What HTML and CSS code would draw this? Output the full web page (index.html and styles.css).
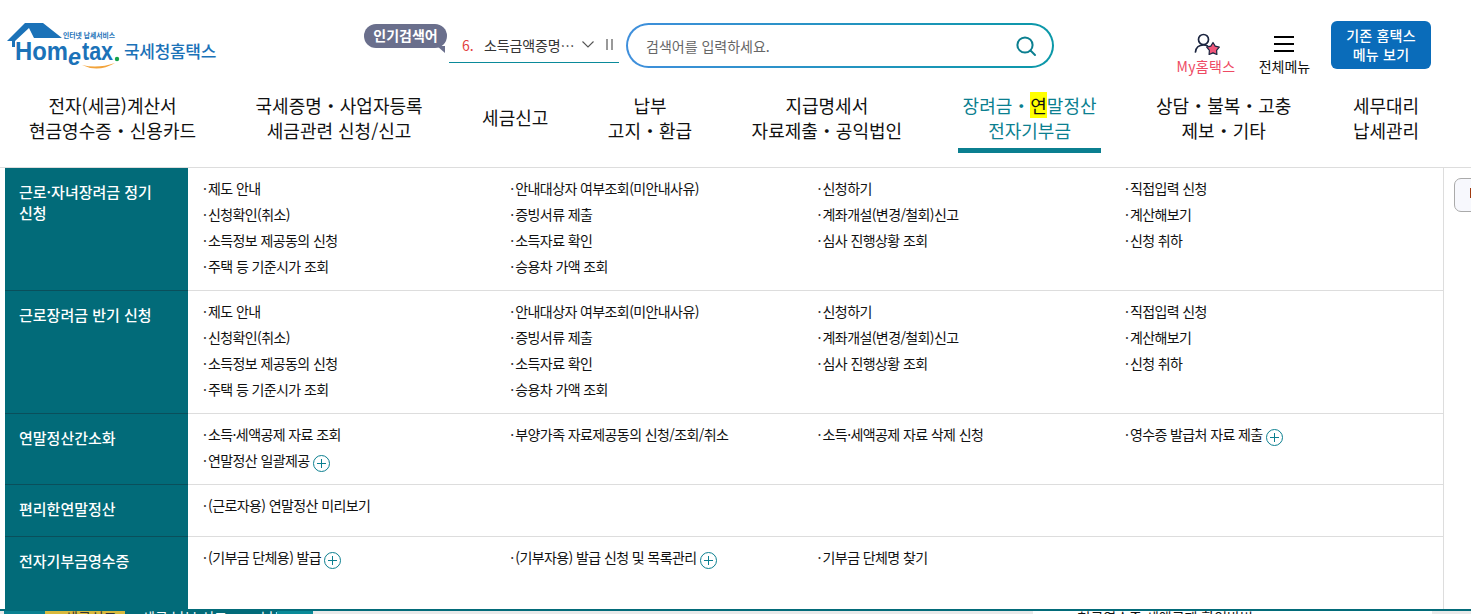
FILE: index.html
```html
<!DOCTYPE html>
<html lang="ko">
<head>
<meta charset="utf-8">
<title>국세청홈택스</title>
<link rel="stylesheet" href="styles.css">
</head>
<body>
<div class="page">
  <header class="top">
    <a class="logo">
      <svg class="logo-mark" width="118" height="60" viewBox="0 0 118 60" aria-hidden="true">
        <path d="M1 28 L19 10 H37 L56 25 H28 L23 15 L9 28 V34 H6 V28 Z" fill="#1b72b8"/>
        <text x="57" y="25" class="logo-small" textLength="52" lengthAdjust="spacingAndGlyphs">인터넷 납세서비스</text>
        <text x="9" y="47" class="logo-home" textLength="53" lengthAdjust="spacingAndGlyphs">Hom</text>
        <text x="62" y="52" class="logo-e" textLength="13" lengthAdjust="spacingAndGlyphs">e</text>
        <text x="76" y="47" class="logo-tax" textLength="31" lengthAdjust="spacingAndGlyphs">tax</text>
        <circle cx="111" cy="46" r="2.200" fill="#16a34a"/>
        <path d="M76 52 Q92 60 109 50 Q92 56 76 52 Z" fill="#f2a33a"/>
      </svg>
      <span class="logo-name">국세청홈택스</span>
    </a>
    <div class="popular">
      <span class="bubble">인기검색어</span>
      <div class="ticker">
        <span class="rank">6.</span>
        <span class="ticker-text">소득금액증명…</span>
        <svg width="12" height="7" viewBox="0 0 12 7" aria-hidden="true"><path d="M.5.5l5.500 5.500 5.500-5.500" fill="none" stroke="#555" stroke-width="1.100"/></svg>
        <span class="pause"></span>
      </div>
    </div>
    <div class="search">
      <span class="search-ph">검색어를 입력하세요.</span>
      <svg width="22" height="22" viewBox="0 0 22 22" aria-hidden="true"><circle cx="10" cy="10" r="7.600" fill="none" stroke="#0b7f90" stroke-width="2"/><path d="M15.500 15.500L20 20" stroke="#0b7f90" stroke-width="2" stroke-linecap="round"/></svg>
    </div>
    <div class="util">
      <a class="util-item my">
        <svg width="28" height="22" viewBox="0 0 28 22" aria-hidden="true">
          <circle cx="9.500" cy="6.500" r="5" fill="none" stroke="#1b2540" stroke-width="1.700"/>
          <path d="M1.500 19c.5-5 3.500-7 8-7 1.500 0 3 .3 4 1" fill="none" stroke="#1b2540" stroke-width="1.700" stroke-linecap="round"/>
          <path d="M19 9.500l2.200 3.600 4.100 1-2.700 3.200.3 4.200-3.900-1.600-3.900 1.600.3-4.200-2.700-3.200 4.100-1z" fill="#f0567a" stroke="#1b2540" stroke-width="1.200" stroke-linejoin="round"/>
        </svg>
        <span>My홈택스</span>
      </a>
      <a class="util-item all">
        <svg width="20" height="22" viewBox="0 0 20 22" aria-hidden="true"><path d="M0 4h20M0 11h20M0 18h20" stroke="#000" stroke-width="2"/></svg>
        <span>전체메뉴</span>
      </a>
      <a class="old-btn">기존 홈택스<br>메뉴 보기</a>
    </div>
  </header>

  <nav class="gnb">
    <a class="gnb-item">전자(세금)계산서<br>현금영수증・신용카드</a>
    <a class="gnb-item">국세증명・사업자등록<br>세금관련 신청/신고</a>
    <a class="gnb-item single">세금신고</a>
    <a class="gnb-item">납부<br>고지・환급</a>
    <a class="gnb-item">지급명세서<br>자료제출・공익법인</a>
    <a class="gnb-item active">장려금・<mark>연</mark>말정산<br>전자기부금</a>
    <a class="gnb-item">상담・불복・고충<br>제보・기타</a>
    <a class="gnb-item">세무대리<br>납세관리</a>
  </nav>

  <main class="panel">
    <div class="table">
      <section class="row r1">
        <h3 class="side">근로·자녀장려금 정기<br>신청</h3>
        <ul class="links">
          <li>제도 안내</li><li>안내대상자 여부조회(미안내사유)</li><li>신청하기</li><li>직접입력 신청</li>
          <li>신청확인(취소)</li><li>증빙서류 제출</li><li>계좌개설(변경/철회)신고</li><li>계산해보기</li>
          <li>소득정보 제공동의 신청</li><li>소득자료 확인</li><li>심사 진행상황 조회</li><li>신청 취하</li>
          <li>주택 등 기준시가 조회</li><li>승용차 가액 조회</li>
        </ul>
      </section>
      <section class="row r1">
        <h3 class="side">근로장려금 반기 신청</h3>
        <ul class="links">
          <li>제도 안내</li><li>안내대상자 여부조회(미안내사유)</li><li>신청하기</li><li>직접입력 신청</li>
          <li>신청확인(취소)</li><li>증빙서류 제출</li><li>계좌개설(변경/철회)신고</li><li>계산해보기</li>
          <li>소득정보 제공동의 신청</li><li>소득자료 확인</li><li>심사 진행상황 조회</li><li>신청 취하</li>
          <li>주택 등 기준시가 조회</li><li>승용차 가액 조회</li>
        </ul>
      </section>
      <section class="row r3">
        <h3 class="side">연말정산간소화</h3>
        <ul class="links">
          <li>소득·세액공제 자료 조회</li><li>부양가족 자료제공동의 신청/조회/취소</li><li>소득·세액공제 자료 삭제 신청</li><li>영수증 발급처 자료 제출 <i class="plus"></i></li>
          <li>연말정산 일괄제공 <i class="plus"></i></li>
        </ul>
      </section>
      <section class="row r4">
        <h3 class="side">편리한연말정산</h3>
        <ul class="links">
          <li>(근로자용) 연말정산 미리보기</li>
        </ul>
      </section>
      <section class="row r5">
        <h3 class="side">전자기부금영수증</h3>
        <ul class="links">
          <li>(기부금 단체용) 발급 <i class="plus"></i></li><li>(기부자용) 발급 신청 및 목록관리 <i class="plus"></i></li><li>기부금 단체명 찾기</li>
        </ul>
      </section>
    </div>
    <aside class="rail"><span class="rail-btn"></span></aside>
  </main>

  <div class="under">
    <span class="u u-gray"></span>
    <span class="u u-teal"></span>
    <span class="u u-yellow">세금신고</span>
    <span class="u u-dark">세금 납부 신고 <b class="u-gap">납부</b></span>
    <span class="u u-light"></span>
    <span class="u u-mid"></span>
    <span class="u u-white"><b class="u-dot">·</b>현금영수증 세액공제 확인방법</span>
    <span class="u u-end"></span>
  </div>
</div>
</body>
</html>
```
FILE: styles.css
```css
* { box-sizing: border-box; }
html, body { margin: 0; padding: 0; background: #fff; }
body { font-family: "Noto Sans CJK KR", "Noto Sans", sans-serif; color: #111; }
.page { width: 1471px; height: 614px; overflow: hidden; display: flex; flex-direction: column; }

.top { height: 90px; display: flex; align-items: flex-start; flex: none; }
.logo { display: flex; align-items: flex-start; margin: 13px 0 0 6px; width: 358px; flex: none; }
.logo-mark { display: block; flex: none; }
.logo-small { font-size: 7px; fill: #1b72b8; font-weight: 700; }
.logo-home, .logo-tax { font-family: "Liberation Sans", sans-serif; font-size: 26px; font-weight: 700; fill: #1b72b8; }
.logo-e { font-family: "Liberation Sans", sans-serif; font-size: 23px; font-weight: 700; font-style: italic; fill: #1b72b8; }
.logo-name { font-size: 17px; font-weight: 500; color: #1b72b8; letter-spacing: -.3px; margin-top: 25px; }

.popular { width: 255px; flex: none; position: relative; height: 70px; }
.bubble { position: absolute; left: 0; top: 24px; background: #6a6f8c; color: #fff; border-radius: 12px; height: 24px; width: 83px; line-height: 23px; text-align: center; font-size: 14px; font-weight: 700; }
.bubble::after { content: ""; position: absolute; right: 2px; bottom: -5px; border-top: 7px solid #6a6f8c; border-left: 8px solid transparent; }
.ticker { position: absolute; left: 85px; top: 27px; width: 170px; height: 36px; border-bottom: 1px solid #0a8a9a; display: flex; align-items: center; font-size: 14px; color: #333; padding-left: 13px; }
.rank { color: #e2403f; width: 22px; }
.ticker-text { width: 98px; letter-spacing: -.15px; white-space: nowrap; }
.pause { width: 7px; height: 11px; margin-left: 12px; border-left: 2px solid #999; border-right: 2px solid #999; }

.search { width: 428px; height: 45px; margin: 23px 0 0 7px; border: 2px solid transparent; border-radius: 23px; background: linear-gradient(#fff,#fff) padding-box, linear-gradient(90deg,#3f8fdc,#0b98a8) border-box; display: flex; align-items: center; justify-content: space-between; padding: 0 15px 0 18px; flex: none; }
.search-ph { font-size: 14px; color: #666; }

.util { display: flex; align-items: flex-start; margin-left: 122px; flex: none; }
.util-item { display: flex; flex-direction: column; align-items: center; font-size: 14px; white-space: nowrap; }
.util-item svg { display: block; margin-top: 33px; }
.util-item span { line-height: 20px; margin-top: 1px; }
.my { width: 60px; color: #ee4a63; letter-spacing: .3px; }
.my svg { margin-left: 4px; }
.all { width: 51px; margin-left: 23px; color: #111; }
.all svg { margin-right: 1px; }
.old-btn { width: 100px; height: 48px; margin: 21px 0 0 21px; background: #0a6cba; border-radius: 6px; color: #fff; font-size: 14px; font-weight: 500; line-height: 19px; text-align: center; padding-top: 5px; letter-spacing: .2px; }

.gnb { height: 78px; flex: none; display: flex; gap: 59.500px; padding-left: 29px; border-bottom: 1px solid #ddd; align-items: flex-start; }
.gnb-item { display: block; font-size: 18px; line-height: 25px; text-align: center; white-space: nowrap; padding-top: 3px; position: relative; height: 64px; }
.gnb-item.single { padding-top: 15px; }
.gnb-item.active { color: #0b7f90; margin-left: 1px; }
.gnb-item:last-child { margin-left: 2px; }
.gnb-item.active::after { content: ""; position: absolute; left: -5px; right: -4px; top: 58px; height: 5px; background: #0b7f90; }
.gnb-item mark { background: #ffff00; color: #111; }

.panel { flex: none; height: 441px; padding-left: 5px; display: flex; }
.table { width: 1439px; border-right: 1px solid #ddd; flex: none; }
.row { display: flex; border-bottom: 1px solid #ddd; }
.r1 { height: 123px; }
.r3 { height: 71px; }
.r4 { height: 52px; }
.r5 { height: 72px; border-bottom: 0; }
.side { width: 183px; flex: none; margin: 0 0 -1px; background: #026b79; border-bottom: 1px solid #0a4f5b; color: #fff; font-size: 15px; font-weight: 500; line-height: 21px; padding: 13px 0 0 14px; }
.r5 .side { border-bottom: 0; margin-bottom: 0; }
.links { flex: 1; margin: 0; list-style: none; padding: 7px 0 0 15px; display: grid; grid-template-columns: repeat(4, 307.300px); grid-auto-rows: 26px; align-content: start; }
.links li { font-size: 14px; line-height: 26px; letter-spacing: -.6px; white-space: nowrap; color: #111; }
.links li::before { content: "·"; display: inline-block; width: 5px; color: #333; }
.plus { display: inline-block; position: relative; width: 17px; height: 17px; border: 1px solid #0b7f90; border-radius: 50%; vertical-align: -6px; }
.plus::before { content: ""; position: absolute; left: 3px; right: 3px; top: 7px; height: 1px; background: #0b7f90; }
.plus::after { content: ""; position: absolute; top: 3px; bottom: 3px; left: 7px; width: 1px; background: #0b7f90; }

.rail { flex: 1; padding: 10px 0 0 10px; }
.rail-btn { display: block; width: 40px; height: 34px; background: #f7f8fd; border: 1px solid #aaa; border-radius: 7px; position: relative; }
.rail-btn::after { content: ""; position: absolute; left: 15px; top: 9px; width: 3px; height: 10px; background: #a03a10; }

.under { flex: 1; min-height: 0; border-top: 2px solid #026b79; display: flex; overflow: hidden; align-items: flex-start; }
.u { display: block; height: 14px; font-size: 14px; line-height: 14px; margin-top: -1px; white-space: nowrap; flex: none; }
.u-gray { width: 4px; background: #e9e9e9; }
.u-teal { width: 41px; background: #0a8090; }
.u-yellow { width: 80px; background: #d8b93c; color: #333; padding-left: 20px; }
.u-dark { width: 152px; background: #026b79; color: #fff; padding-left: 17px; }
.u-gap { font-weight: 400; margin-left: 30px; }
.u-light { width: 36px; background: #0a8a98; }
.u-mid { width: 720px; background: #e9e9e9; }
.u-white { width: 399px; background: #fff; color: #111; padding-left: 30px; }
.u-dot { color: #e2403f; margin-right: 10px; }
.u-end { flex: 1; background: #e9e9e9; }
```
